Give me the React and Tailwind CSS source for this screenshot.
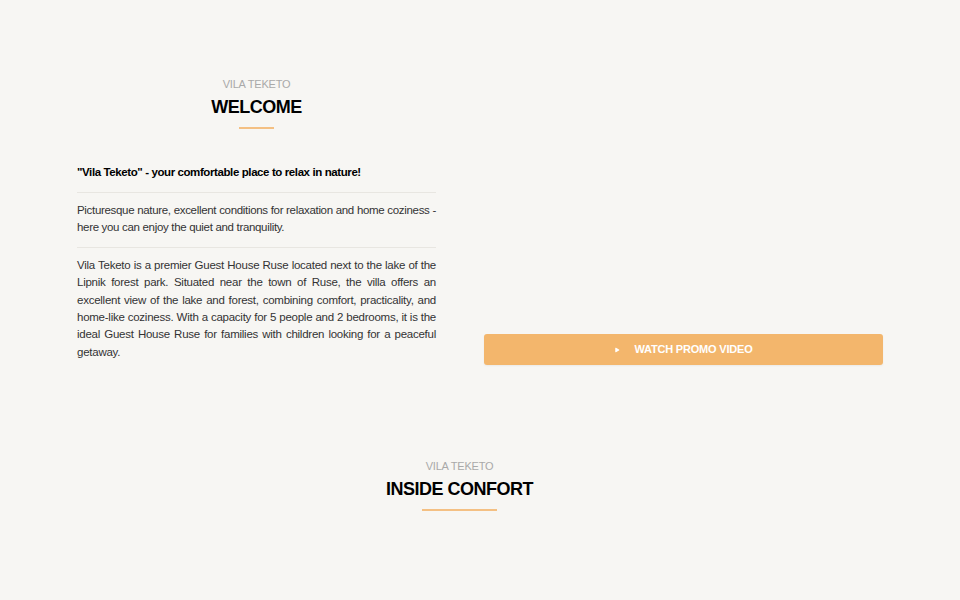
import { Play } from "lucide-react";

const SectionTitle = ({ sub, title, lineWidth }) => (
  <div className="flex flex-col items-center">
    <span className="text-[11px] leading-[14px] tracking-[-0.2px] text-[#a9a9a9] uppercase">{sub}</span>
    <h2 className="mt-[5px] text-[18px] leading-[22px] tracking-[-0.5px] font-bold text-black">{title}</h2>
    <div className={`mt-[9px] h-[2px] bg-[#f4c083] ${lineWidth}`} />
  </div>
);

export default function App() {
  return (
    <div
      className="min-h-[600px] w-full bg-[#f7f6f3] text-[#333]"
      style={{ fontFamily: '"Liberation Sans", Arial, sans-serif' }}
    >
      <div className="pt-[77px] flex justify-center">
        <div className="w-[806px] flex gap-[48px]">
          <div className="w-[359px] shrink-0">
            <SectionTitle sub="Vila Teketo" title="WELCOME" lineWidth="w-[35px]" />
            <p className="mt-[35px] text-[11.5px] leading-[17px] tracking-[-0.4px] font-bold text-black pb-[11px] border-b border-[#e8e6e1]">
              "Vila Teketo" - your comfortable place to relax in nature!
            </p>
            <p className="pt-[9px] pb-[10px] text-[11.5px] leading-[17.4px] tracking-[-0.32px] text-justify border-b border-[#e8e6e1]">
              Picturesque nature, excellent conditions for relaxation and home coziness - here you can enjoy the quiet and tranquility.
            </p>
            <p className="pt-[9px] text-[11.5px] leading-[17.4px] tracking-[-0.25px] text-justify">
              Vila Teketo is a premier Guest House Ruse located next to the lake of the Lipnik forest park. Situated near the town of Ruse, the villa offers an excellent view of the lake and forest, combining comfort, practicality, and home-like coziness. With a capacity for 5 people and 2 bedrooms, it is the ideal Guest House Ruse for families with children looking for a peaceful getaway.
            </p>
          </div>
          <div className="flex-1">
            <button className="mt-[257px] w-full h-[31px] rounded-[3px] bg-[#f3b66c] text-white text-[11px] tracking-[-0.2px] font-bold flex items-center justify-center gap-[14px] shadow-[0_1px_2px_rgba(0,0,0,0.05)]">
              <Play size={6} fill="white" strokeWidth={0} />
              WATCH PROMO VIDEO
            </button>
          </div>
        </div>
      </div>
      <div className="mt-[94px] pr-[41px]">
        <SectionTitle sub="Vila Teketo" title="INSIDE CONFORT" lineWidth="w-[75px]" />
      </div>
    </div>
  );
}
